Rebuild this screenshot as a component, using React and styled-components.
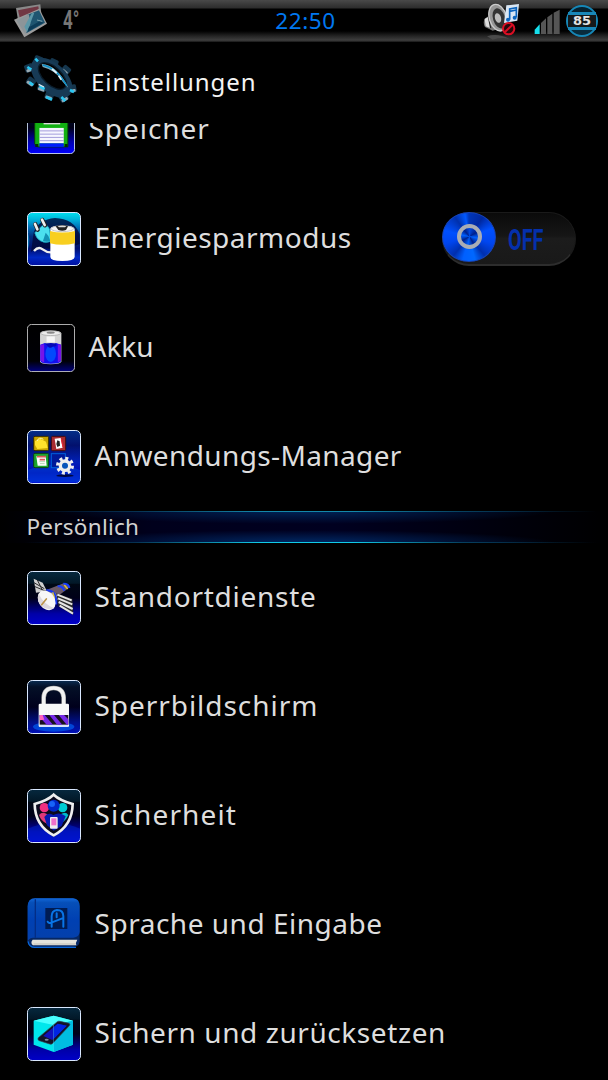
import React from 'react';
import styled, { createGlobalStyle } from 'styled-components';

const GlobalStyle = createGlobalStyle`
  * { box-sizing: border-box; }
  body {
    margin: 0;
    background: #000;
    font-family: 'Noto Sans', sans-serif;
    overflow: hidden;
  }
`

/*
     ---> Layout
*/
const Screen = styled.div`
  display: flex;
  flex-direction: column;
  width: 608px;
  height: 1080px;
  background: #000;
  overflow: hidden;
`
const StatusBar = styled.div`
  display: grid;
  grid-template-columns: 1fr auto 1fr;
  flex: none;
  height: 42px;
  padding: 0 10px 0 13px;
  background: linear-gradient(#494949 0, #2c2c2c 8px, #000 9px, #000 31px, #242424 36px, #3d3d3d 40px, #303030 41px, #111 42px);
`
const StatusLeft = styled.div`
  display: flex;
  align-items: flex-start;
  gap: 15px;
  padding-top: 4px;
`
const StatusRight = styled.div`
  display: flex;
  justify-content: flex-end;
  align-items: flex-start;
  padding-top: 3px;
`
const Temperature = styled.span`
  font: 700 25px/34px Roboto, sans-serif;
  color: #777;
  transform: scaleX(0.68);
  transform-origin: left;
`
const Clock = styled.div`
  font-size: 22.5px;
  line-height: 41px;
  letter-spacing: 0.55px;
  color: #0078f0;
`
const Header = styled.header`
  display: flex;
  align-items: center;
  flex: none;
  height: 81px;
  padding: 0 0 1px 24px;
  gap: 13px;
`
const Title = styled.h1`
  margin: 0;
  padding-bottom: 2px;
  font-size: 24px;
  font-weight: 400;
  letter-spacing: 0.95px;
  color: #f4f4f4;
`
const List = styled.main`
  display: flex;
  flex-direction: column;
  flex: 1;
  min-height: 0;
  overflow: hidden;
`
const Row = styled.div`
  display: flex;
  align-items: center;
  flex: none;
  height: 109px;
  padding: 0 32px 0 27px;
  gap: 13px;
  &:first-child { margin-top: -48px; }
`
const Label = styled.span`
  flex: 1;
  font-size: 28px;
  line-height: 38px;
  white-space: nowrap;
  letter-spacing: ${p => p.$spacing || 0}px;
  color: #dedede;
  padding: 0 0 4px 0.5px;
`
const Section = styled.div`
  display: flex;
  flex: none;
  flex-direction: column;
  height: 32px;
  background:
    radial-gradient(ellipse 250px 13px at 50% 0, #002456, transparent),
    radial-gradient(ellipse 250px 13px at 50% 100%, #002a66, transparent),
    linear-gradient(90deg, #000 0, #00001c 25%, #000020 55%, #00000a 85%, #000 100%);
`
const SectionLine = styled.div`
  height: 1px;
  background: linear-gradient(90deg, transparent 4%, #063050 22%, ${p => p.$color} 43%, ${p => p.$color} 58%, #06405f 76%, transparent 98%);
`
const SectionTitle = styled.div`
  flex: 1;
  padding-left: 26.5px;
  font-size: 22.5px;
  line-height: 30px;
  letter-spacing: 0.25px;
  color: #d2d2d2;
`

/*
     ---> Switch
*/
const Track = styled.div`
  display: flex;
  align-items: center;
  width: 134px;
  height: 54px;
  gap: 12px;
  border-radius: 27px;
  border: 1px solid #1a1a1a;
  border-bottom: 2px solid #2d2d2d;
  background: linear-gradient(#0b0b0b, #161616 45%, #1c1c1c 50%, #191919);
`
const Knob = styled.div`
  display: flex;
  align-items: center;
  justify-content: center;
  width: 54px;
  height: 50px;
  margin: -3px 0 0 -1px;
  border-radius: 50%;
  border: 1px solid #1744b8;
  background: conic-gradient(#0036b8, #0028a0 35deg, #0050ff 70deg, #0046f0 105deg, #002fae 140deg, #0068ff 165deg, #0060ff 195deg, #002fae 220deg, #0046f0 255deg, #0050ff 285deg, #0030ac 325deg, #0058ff 350deg, #0036b8);
`
const Ring = styled.div`
  width: 25px;
  height: 25px;
  border-radius: 50%;
  border: 4px solid #a9adb4;
  background: conic-gradient(#0048e0, #00208c 60deg, #0060ff 100deg, #00208c 150deg, #0060ff 190deg, #00208c 240deg, #0060ff 280deg, #00208c 320deg, #0048e0);
`
const SwitchText = styled.span`
  padding-top: 3px;
  font: 700 30px/50px Roboto, sans-serif;
  color: #0430ac;
  transform: scaleX(0.66);
  transform-origin: left;
`

/*
     ---> Icons
*/
const Svg = styled.svg`
  display: block;
  flex: none;
`
const SoundSvg = styled(Svg)`
  margin-right: 13px;
`

// Rounded square behind every settings icon, 162 units wide
function Tile({ size = 54, id, stops, border = '#d9e8ff', children }) {
    return (
        <Svg width={size} height={size} viewBox="0 0 162 162">
            <defs>
                <linearGradient id={id} x1="0" y1="0" x2="0" y2="1">
                    {stops.map(([offset, color]) => <stop key={offset} offset={offset} stopColor={color} />)}
                </linearGradient>
            </defs>
            <rect x="2" y="2" width="158" height="158" rx="13" fill={`url(#${id})`} />
            {children}
            <rect x="1.5" y="1.5" width="159" height="159" rx="14" fill="none" stroke={border} strokeWidth="3" />
        </Svg>
    );
}

const night = [[0, '#06283e'], [0.22, '#021827'], [0.24, '#000814'], [0.5, '#000018'], [0.8, '#0000a8'], [1, '#0000c8']];

function StorageIcon() {
    return (
        <Tile size={48} id="storage" stops={[[0, '#001030'], [0.45, '#000018'], [0.75, '#0000b0'], [1, '#0000ff']]}>
            <path d="M26 26H138V138H36L26 128Z" fill="#12b012" stroke="#043c04" strokeWidth="3" />
            <rect x="56" y="30" width="56" height="32" fill="#ddd" />
            <rect x="42" y="74" width="82" height="52" fill="#f6f6ff" />
            <path d="M42 84H124M42 95H124M42 106H124M42 117H124" stroke="#9a92d8" strokeWidth="3" />
            <rect x="42" y="126" width="82" height="12" fill="#001cff" />
            <path d="M28 128H38V138H28ZM127 128H137V138H127Z" fill="#022c02" />
        </Tile>
    );
}

function PowerIcon() {
    return (
        <Tile id="power" stops={[[0, '#00dfee'], [0.12, '#00b8dd'], [0.28, '#0070b8'], [0.45, '#003080'], [0.68, '#001070'], [0.85, '#0028c4'], [1, '#0010a0']]}>
            <path d="M20 62Q34 22 84 18Q140 20 158 66V96Q120 112 70 110Q26 106 12 120Z" fill="#000838" opacity="0.8" />
            <path d="M3 60Q10 84 4 112V60Z" fill="#00b8dd" opacity="0.7" />
            <path d="M23 62L50 37Q62 38 68 52L71 88Q56 96 41 87Q26 78 23 62Z" fill="#4be0ee" stroke="#0a9ab8" strokeWidth="2" />
            <path d="M56 62Q66 70 70 86Q58 92 48 86Z" fill="#1493b4" />
            <path d="M25 37L32 53M46 24L54 40" stroke="#222" strokeWidth="13" strokeLinecap="round" />
            <path d="M24 36L31 52M45 23L53 39" stroke="#eee" strokeWidth="8" strokeLinecap="round" />
            <path d="M21 117Q34 102 47 112T74 121" fill="none" stroke="#eee" strokeWidth="7" />
            <path d="M70 51V135Q70 147 106 147T143 135V51Q143 41 106 41T70 51Z" fill="#fff" />
            <path d="M69 57Q106 66 144 57V94Q106 103 69 94Z" fill="#f8cf20" />
            <ellipse cx="106" cy="50" rx="34" ry="9" fill="#f5f5f5" stroke="#aaa" strokeWidth="2" />
            <path d="M86 43Q106 36 123 43L117 54Q106 59 94 54Z" fill="#222" />
            <path d="M92 43Q106 38 118 43L114 46H96Z" fill="#ddd" />
        </Tile>
    );
}

function BatteryIcon() {
    return (
        <Tile size={48} id="battery" stops={[[0, '#000'], [0.78, '#000006'], [0.92, '#000052'], [1, '#00007c']]} border="#cfcfcf">
            <path d="M44 32V126Q44 136 80 136T116 126V32Q116 22 80 22T44 32Z" fill="#d4d4d4" />
            <ellipse cx="80" cy="31" rx="34" ry="8" fill="#ececec" stroke="#9c9c9c" strokeWidth="2" />
            <ellipse cx="80" cy="29" rx="14" ry="4" fill="#888" />
            <path d="M66 42H94V62H66Z" fill="#f6f6f6" />
            <path d="M45 70L60 64Q80 78 98 64L115 70V124Q115 134 80 134T45 124Z" fill="#1010ee" />
            <path d="M45 70L58 68V131L45 123ZM104 68L115 70V123L104 130Z" fill="#7514e8" />
            <ellipse cx="80" cy="100" rx="18" ry="28" fill="#0058ff" opacity="0.8" />
            <path d="M60 66Q82 62 98 66Q104 78 88 76Q76 86 70 74Z" fill="#0508b8" />
        </Tile>
    );
}

function AppsIcon() {
    return (
        <Tile id="apps" stops={[[0, '#042e88'], [0.28, '#02116e'], [0.6, '#0120b8'], [0.8, '#0008b4'], [1, '#0018d6']]}>
            <path d="M2 120Q80 88 160 120V156H2Z" fill="#0060e8" opacity="0.35" />
            <rect x="20" y="19" width="45" height="43" rx="4" fill="#c8a400" stroke="#342b00" strokeWidth="3" />
            <path d="M24 33L40 26L57 35L62 54L31 57L24 45Z" fill="#ffe22c" />
            <path d="M30 33Q36 19 49 28" fill="none" stroke="#fff8bb" strokeWidth="3" />
            <rect x="73" y="19" width="43" height="43" rx="4" fill="#a82c32" stroke="#400c10" strokeWidth="3" />
            <path d="M83 26L101 24L107 53L88 57Z" fill="#fff" />
            <path d="M91 31L98 34L99 47L91 51L88 42Z" fill="#222" />
            <path d="M103 27L108 52" stroke="#e23" strokeWidth="3" />
            <rect x="20" y="70" width="45" height="43" rx="4" fill="#1ca52e" stroke="#0b3f14" strokeWidth="3" />
            <path d="M28 79H56L59 107H32Z" fill="#fff" />
            <path d="M30 80H57M38 89H54" stroke="#db5a58" strokeWidth="5" />
            <path d="M37 95H54M39 101H53" stroke="#b4d8b4" strokeWidth="3" />
            <rect x="73" y="71" width="42" height="42" fill="#001898" stroke="#0060dc" strokeWidth="3" />
            <ellipse cx="114" cy="137" rx="26" ry="4" fill="#000840" />
            <circle cx="114" cy="107" r="21" fill="none" stroke="#eee" strokeWidth="12" strokeDasharray="8.5 8" />
            <circle cx="114" cy="107" r="14" fill="#0754ba" stroke="#eee" strokeWidth="10" />
        </Tile>
    );
}

function SatelliteIcon() {
    return (
        <Tile id="satellite" stops={night}>
            <path d="M20 23L47 35L60 61L27 65Z" fill="#cfcfcf" />
            <path d="M21 35L52 53M24 47L55 60M31 27L46 57" stroke="#292929" strokeWidth="3" />
            <path d="M50 60L112 36L128 49L74 89Z" fill="#6b5a68" />
            <path d="M70 65Q88 59 94 84L81 98Q61 85 70 65Z" fill="#c7c0c5" />
            <path d="M58 58Q91 57 87 100" fill="none" stroke="#1737ec" strokeWidth="7" />
            <path d="M92 46Q106 44 112 59M109 38Q126 38 127 51" fill="none" stroke="#173eff" strokeWidth="6" />
            <path d="M112 42L122 54" stroke="#dfc53a" strokeWidth="4" />
            <path d="M77 64Q85 82 79 96" fill="none" stroke="#dfc53a" strokeWidth="4" />
            <ellipse cx="59" cy="88" rx="24" ry="32" transform="rotate(-35 59 88)" fill="#f7f7f7" />
            <path d="M35 69Q51 100 82 112Q60 120 44 106Q27 90 35 69Z" fill="#dcd8de" />
            <path d="M58 84L44 101" stroke="#bd954a" strokeWidth="5" strokeLinecap="round" />
            <path d="M88 67L136 83L139 132L95 106Z" fill="#2c2c2c" />
            <path d="M91 71L134 88M93 82L136 100M95 93L137 114M98 104L138 128" stroke="#e4e4e4" strokeWidth="6" />
        </Tile>
    );
}

function LockIcon() {
    return (
        <Tile id="lock" stops={[[0, '#0a2b50'], [0.12, '#041027'], [0.5, '#00001c'], [0.8, '#00108a'], [1, '#0010b8']]}>
            <ellipse cx="80" cy="140" rx="62" ry="15" fill="#006aff" opacity="0.6" />
            <path d="M50 73V52Q52 24 80 24T110 52V73" fill="none" stroke="#999" strokeWidth="14" />
            <path d="M50 73V52Q52 24 80 24T110 52V73" fill="none" stroke="#f2f2f2" strokeWidth="10" />
            <rect x="35" y="71" width="91" height="70" rx="4" fill="#f8f8f8" />
            <rect x="38" y="105" width="86" height="29" fill="#161020" />
            <path d="M38 105H53L78 134H59L38 112ZM67 105H81L106 134H90ZM95 105H111L124 118V134H119Z" fill="#7528e8" />
            <path d="M38 105H47L52 119L38 121Z" fill="#ff62bb" />
            <path d="M38 138H123" stroke="#c6d8ff" strokeWidth="4" />
        </Tile>
    );
}

function SecurityIcon() {
    return (
        <Tile id="security" stops={night}>
            <path d="M2 119Q80 83 160 119V156H2Z" fill="#0030e0" opacity="0.4" />
            <path d="M80 16Q98 34 138 44Q137 110 80 143Q23 110 22 44Q62 34 80 16Z" fill="#0a0a1c" />
            <circle cx="52" cy="56" r="14" fill="#f03080" />
            <circle cx="107" cy="56" r="14" fill="#00cdd4" />
            <path d="M36 78Q46 65 61 76V105Q42 97 36 78Z" fill="#e03878" />
            <path d="M101 76Q116 65 124 78Q116 96 101 103Z" fill="#00b9cb" />
            <path d="M52 84Q62 68 79 78Q98 67 116 82L104 111L80 125L60 109Z" fill="#0718b0" />
            <circle cx="80" cy="50" r="18" fill="#0028c8" />
            <circle cx="75" cy="45" r="9" fill="#1764f8" />
            <rect x="69" y="84" width="23" height="35" rx="3" fill="#eee" />
            <rect x="73" y="88" width="15" height="21" fill="#ef70cb" />
            <path d="M80 17Q98 34 137 45Q136 110 80 139Q24 110 23 45Q62 34 80 17Z" fill="none" stroke="#eee" strokeWidth="8" />
        </Tile>
    );
}

function LanguageIcon() {
    return (
        <Svg width="54" height="54" viewBox="0 0 162 162">
            <defs>
                <linearGradient id="cover" x1="0" y1="0" x2="0" y2="1">
                    <stop offset="0" stopColor="#1267d8" />
                    <stop offset="0.1" stopColor="#064fb8" />
                    <stop offset="0.5" stopColor="#0040b2" />
                    <stop offset="1" stopColor="#0540aa" />
                </linearGradient>
            </defs>
            <path d="M2 25Q3 1 24 1H138Q158 3 158 25V130Q157 147 138 147H22Q2 147 2 128Z" fill="#062763" />
            <path d="M2 25Q3 1 24 1H138Q158 3 158 25V102Q157 117 139 119H17Q3 121 2 132Z" fill="url(#cover)" />
            <path d="M25 4V119" stroke="#032d86" strokeWidth="4" />
            <path d="M17 125H151Q145 133 148 142H18Q9 135 17 125Z" fill="#e4e3dc" />
            <path d="M20 138H146" stroke="#b4b0a8" strokeWidth="2" />
            <path d="M3 130Q6 148 23 148H147" fill="none" stroke="#0864d6" strokeWidth="4" />
            <rect x="55" y="30" width="66" height="63" fill="#001c54" />
            <path d="M74 86V55Q74 38 90 36Q109 36 109 55V86M62 71Q65 78 75 73L106 61M89 46V58" fill="none" stroke="#0875e7" strokeWidth="6" strokeLinecap="round" />
        </Svg>
    );
}

function BackupIcon() {
    return (
        <Tile id="backup" stops={night}>
            <path d="M20 41L80 26L138 41V113L80 135L20 113Z" fill="#00e7ec" />
            <path d="M20 41L80 54L138 41L80 26Z" fill="#48ffff" />
            <path d="M80 54L138 41V113L80 135Z" fill="#00bde1" />
            <path d="M34 92L91 44Q94 42 99 43L126 49Q131 51 127 56L78 108Q74 113 68 111L37 101Q30 98 34 92Z" fill="#121426" stroke="#344152" strokeWidth="2" />
            <path d="M49 87L92 50L119 56L76 99Z" fill="#1010bb" />
            <path d="M80 61L92 50L119 56L80 96Z" fill="#0024e4" />
            <path d="M79 54V132" stroke="#55ddff" strokeWidth="2" opacity="0.65" />
            <ellipse cx="59" cy="98" rx="6" ry="3" fill="#7d8ca1" />
        </Tile>
    );
}

function PhotoIcon() {
    return (
        <Svg width="35" height="35" viewBox="0 0 105 105">
            <path d="M9 12L82 1L87 48L19 73Z" fill="#898989" />
            <path d="M15 19L76 7L80 38L24 57Z" fill="#713743" />
            <path d="M3 47L79 14L102 59L34 100Z" fill="#9c9c9c" />
            <path d="M42 33L78 19L96 56L40 88Z" fill="#1f5570" />
            <path d="M10 49L48 31L52 60L37 91Z" fill="#8c9599" />
            <path d="M34 68L56 28L64 26L42 84Z" fill="#5c98a8" />
            <path d="M48 70L80 52L91 56L44 83Z" fill="#0d3c58" />
            <path d="M72 48L88 52" stroke="#7fa4ae" strokeWidth="3" />
        </Svg>
    );
}

const teeth = [
    [43, 15, 20], [15, 39, -20], [21, 80, 35], [54, 97, 20], [76, 122, 20], [119, 128, -30], [144, 101, -10], [126, 45, 40], [89, 24, 25],
];

function GearIcon() {
    return (
        <Svg width="54" height="54" viewBox="0 0 162 162">
            {teeth.map(([x, y, r]) => (
                <g key={`${x}-${y}`} transform={`translate(${x} ${y}) rotate(${r})`}>
                    <rect x="-13" y="-12" width="26" height="24" rx="5" fill="#15364d" />
                    <rect x="-10" y="2" width="20" height="9" rx="3" fill="#9aa9b1" />
                </g>
            ))}
            <ellipse cx="83" cy="68" rx="75" ry="43" transform="rotate(43 83 68)" fill="#173a55" />
            <ellipse cx="85" cy="63" rx="51" ry="27" transform="rotate(43 85 63)" fill="#000" stroke="#0a1c2a" strokeWidth="4" />
            <path d="M53 27Q100 30 133 98Q124 90 116 80Q96 46 56 36Z" fill="#7fa8ba" />
            <path d="M56 30Q98 38 128 92" fill="none" stroke="#0b91c9" strokeWidth="4" />
            <path d="M84 42L98 54M104 62L112 74" stroke="#e4f4fa" strokeWidth="5" />
            <path d="M34 11L42 19M10 36L22 44M16 82L28 90M46 94L62 102M66 126L84 134M112 126L124 138M138 105L150 111" stroke="#2bc7f2" strokeWidth="8" />
            <path d="M44 88L60 96" stroke="#dcecf2" strokeWidth="4" />
        </Svg>
    );
}

function MutedIcon() {
    return (
        <SoundSvg width="38" height="38" viewBox="0 0 114 114">
            <path d="M12 100Q44 90 79 107Q50 104 29 110Z" fill="#4a4a4a" />
            <path d="M5 47L25 34L49 7L58 74L29 83L6 72Q-1 60 5 47Z" fill="#777" />
            <path d="M5 48L20 39L24 76L8 70Z" fill="#ddd" />
            <path d="M16 39L23 75" stroke="#222" strokeWidth="4" />
            <ellipse cx="45" cy="44" rx="26" ry="41" transform="rotate(-17 45 44)" fill="#969696" stroke="#ccc" strokeWidth="4" />
            <ellipse cx="48" cy="46" rx="18" ry="31" transform="rotate(-17 48 46)" fill="#333" />
            <ellipse cx="45" cy="45" rx="9" ry="15" transform="rotate(-17 45 45)" fill="#bbb" />
            <path d="M70 7L108 3L103 53L63 60Z" fill="#d9e6f3" />
            <path d="M80 50V18L100 14V43M80 25L100 21" fill="none" stroke="#0b64bd" strokeWidth="5" />
            <circle cx="75" cy="50" r="6" fill="#0b64bd" /><circle cx="95" cy="44" r="6" fill="#0b64bd" />
            <circle cx="77" cy="77" r="17" fill="#28080c" stroke="#d90e23" strokeWidth="6" />
            <path d="M66 87L88 66" stroke="#d90e23" strokeWidth="6" />
        </SoundSvg>
    );
}

function SignalIcon() {
    return (
        <Svg width="28" height="34" viewBox="0 0 84 102">
            <path d="M2 80L17 64V93H2Z" fill="#16dfec" />
            <path d="M21 60L36 46V93H21ZM40 43L55 32V93H40ZM59 29L77 20V93H59Z" fill="#555" />
        </Svg>
    );
}

const BatteryBadge = styled.div`
  display: flex;
  align-items: center;
  justify-content: center;
  width: 32px;
  height: 32px;
  margin: 2px 0 0 4px;
  border: 2px solid #1687b7;
  border-radius: 50%;
  background: linear-gradient(#062230 20%, #020608 20%, #020608 76%, #092b3c 76%);
`
const BatteryValue = styled.span`
  width: 28px;
  flex: none;
  border: solid #1887b9;
  border-width: 3px 0;
  text-align: center;
  font: 700 13px/12px 'DejaVu Sans', sans-serif;
  color: #e3e3e3;
  background: #15191b;
`

function Toggle() {
    return (
        <Track>
            <Knob><Ring /></Knob>
            <SwitchText>OFF</SwitchText>
        </Track>
    );
}

const device = [
    { label: 'Speicher', icon: <StorageIcon />, spacing: 0.95 },
    { label: 'Energiesparmodus', icon: <PowerIcon />, toggle: true, spacing: 0.5 },
    { label: 'Akku', icon: <BatteryIcon /> },
    { label: 'Anwendungs-Manager', icon: <AppsIcon />, spacing: 0.38 },
];

const personal = [
    { label: 'Standortdienste', icon: <SatelliteIcon />, spacing: 0.72 },
    { label: 'Sperrbildschirm', icon: <LockIcon />, spacing: 0.95 },
    { label: 'Sicherheit', icon: <SecurityIcon />, spacing: 1.15 },
    { label: 'Sprache und Eingabe', icon: <LanguageIcon />, spacing: 0.52 },
    { label: 'Sichern und zurücksetzen', icon: <BackupIcon />, spacing: 0.57 },
];

function Setting({ label, icon, toggle, spacing }) {
    return (
        <Row>
            {icon}
            <Label $spacing={spacing}>{label}</Label>
            {toggle && <Toggle />}
        </Row>
    );
}

function App() {
    return (
        <Screen>
            <GlobalStyle />
            <StatusBar>
                <StatusLeft>
                    <PhotoIcon />
                    <Temperature>4°</Temperature>
                </StatusLeft>
                <Clock>22:50</Clock>
                <StatusRight>
                    <MutedIcon />
                    <SignalIcon />
                    <BatteryBadge><BatteryValue>85</BatteryValue></BatteryBadge>
                </StatusRight>
            </StatusBar>
            <Header>
                <GearIcon />
                <Title>Einstellungen</Title>
            </Header>
            <List>
                {device.map(item => <Setting key={item.label} {...item} />)}
                <Section>
                    <SectionLine $color="#1388aa" />
                    <SectionTitle>Persönlich</SectionTitle>
                    <SectionLine $color="#10cbe8" />
                </Section>
                {personal.map(item => <Setting key={item.label} {...item} />)}
            </List>
        </Screen>
    );
}

export default App;
